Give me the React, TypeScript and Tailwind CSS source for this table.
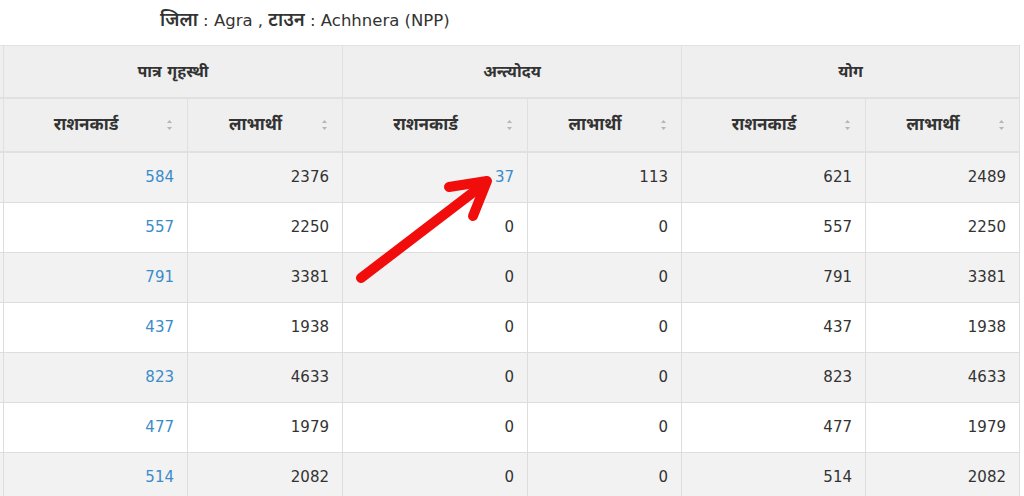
const font = { fontFamily: '"DejaVu Sans", "Noto Sans Devanagari", "Noto Sans", sans-serif' }

const rows = [
  [584, 2376, 37, 113, 621, 2489],
  [557, 2250, 0, 0, 557, 2250],
  [791, 3381, 0, 0, 791, 3381],
  [437, 1938, 0, 0, 437, 1938],
  [823, 4633, 0, 0, 823, 4633],
  [477, 1979, 0, 0, 477, 1979],
  [514, 2082, 0, 0, 514, 2082],
]

const groups = ['पात्र गृहस्थी', 'अन्त्योदय', 'योग']
const subs = ['राशनकार्ड', 'लाभार्थी', 'राशनकार्ड', 'लाभार्थी', 'राशनकार्ड', 'लाभार्थी']

function SortIcon() {
  return (
    <svg width="7" height="12" viewBox="0 0 7 12" className="absolute right-[14px] top-1/2 -translate-y-1/2">
      <path d="M3.5 1 L6 4 L1 4 Z" fill="#b5b5b5" />
      <path d="M1 8 L6 8 L3.5 11 Z" fill="#b5b5b5" />
    </svg>
  )
}

export default function App() {
  return (
    <div className="relative w-[1024px] h-[496px] overflow-hidden bg-white text-[#333]" style={font}>
      {/* Title */}
      <div className="h-[45px] pl-[160px] pt-[8px] text-[16.5px] leading-[24px] text-[#333]">
        <span className="font-semibold text-[18.5px]">जिला</span> : Agra , <span className="font-semibold text-[18.5px]">टाउन</span> : Achhnera (NPP)
      </div>

      {/* Table */}
      <div className="w-[1020px] grid grid-cols-[4px_184px_155px_185px_154px_184px_154px] border-t border-[#e3e3e3]">
        {/* group header row */}
        <div className="h-[53px] bg-[#efefef] border-r border-b-2 border-[#e0e0e0]" />
        {groups.map((g) => (
          <div
            key={g}
            className="col-span-2 h-[53px] bg-[#efefef] border-r border-b-2 border-[#e0e0e0] flex items-center justify-center text-[16px] font-bold"
          >
            {g}
          </div>
        ))}

        {/* sub header row */}
        <div className="h-[54px] bg-[#efefef] border-r border-b-2 border-[#e0e0e0]" />
        {subs.map((s, i) => (
          <div
            key={i}
            className="relative h-[54px] bg-[#efefef] border-r border-b-2 border-[#e0e0e0] flex items-center justify-center pr-[19px] text-[17px] font-bold"
          >
            {s}
            <SortIcon />
          </div>
        ))}

        {/* body */}
        {rows.map((r, ri) => {
          const bg = ri % 2 === 0 ? 'bg-[#f2f2f2]' : 'bg-white'
          return (
            <div key={ri} className="contents">
              <div className={`h-[50px] ${bg} border-r border-b border-[#dddddd]`} />
              {r.map((v, ci) => {
                const isLink = ci === 0 || (ci === 2 && v > 0)
                return (
                  <div
                    key={ci}
                    className={`h-[50px] ${bg} border-r border-b border-[#dddddd] flex items-center justify-end pr-[13px] text-[15px] ${
                      isLink ? 'text-[#3a8cc9]' : 'text-[#333]'
                    }`}
                  >
                    {v}
                  </div>
                )
              })}
            </div>
          )
        })}
      </div>

      {/* red annotation arrow */}
      <svg className="absolute left-0 top-0 pointer-events-none" width="1024" height="496">
        <g stroke="#f20d0d" strokeWidth="10" strokeLinecap="round" strokeLinejoin="round" fill="none">
          <line x1="361" y1="278" x2="484" y2="184" />
          <polyline points="449,187 487,181 473,216" />
        </g>
      </svg>
    </div>
  )
}
